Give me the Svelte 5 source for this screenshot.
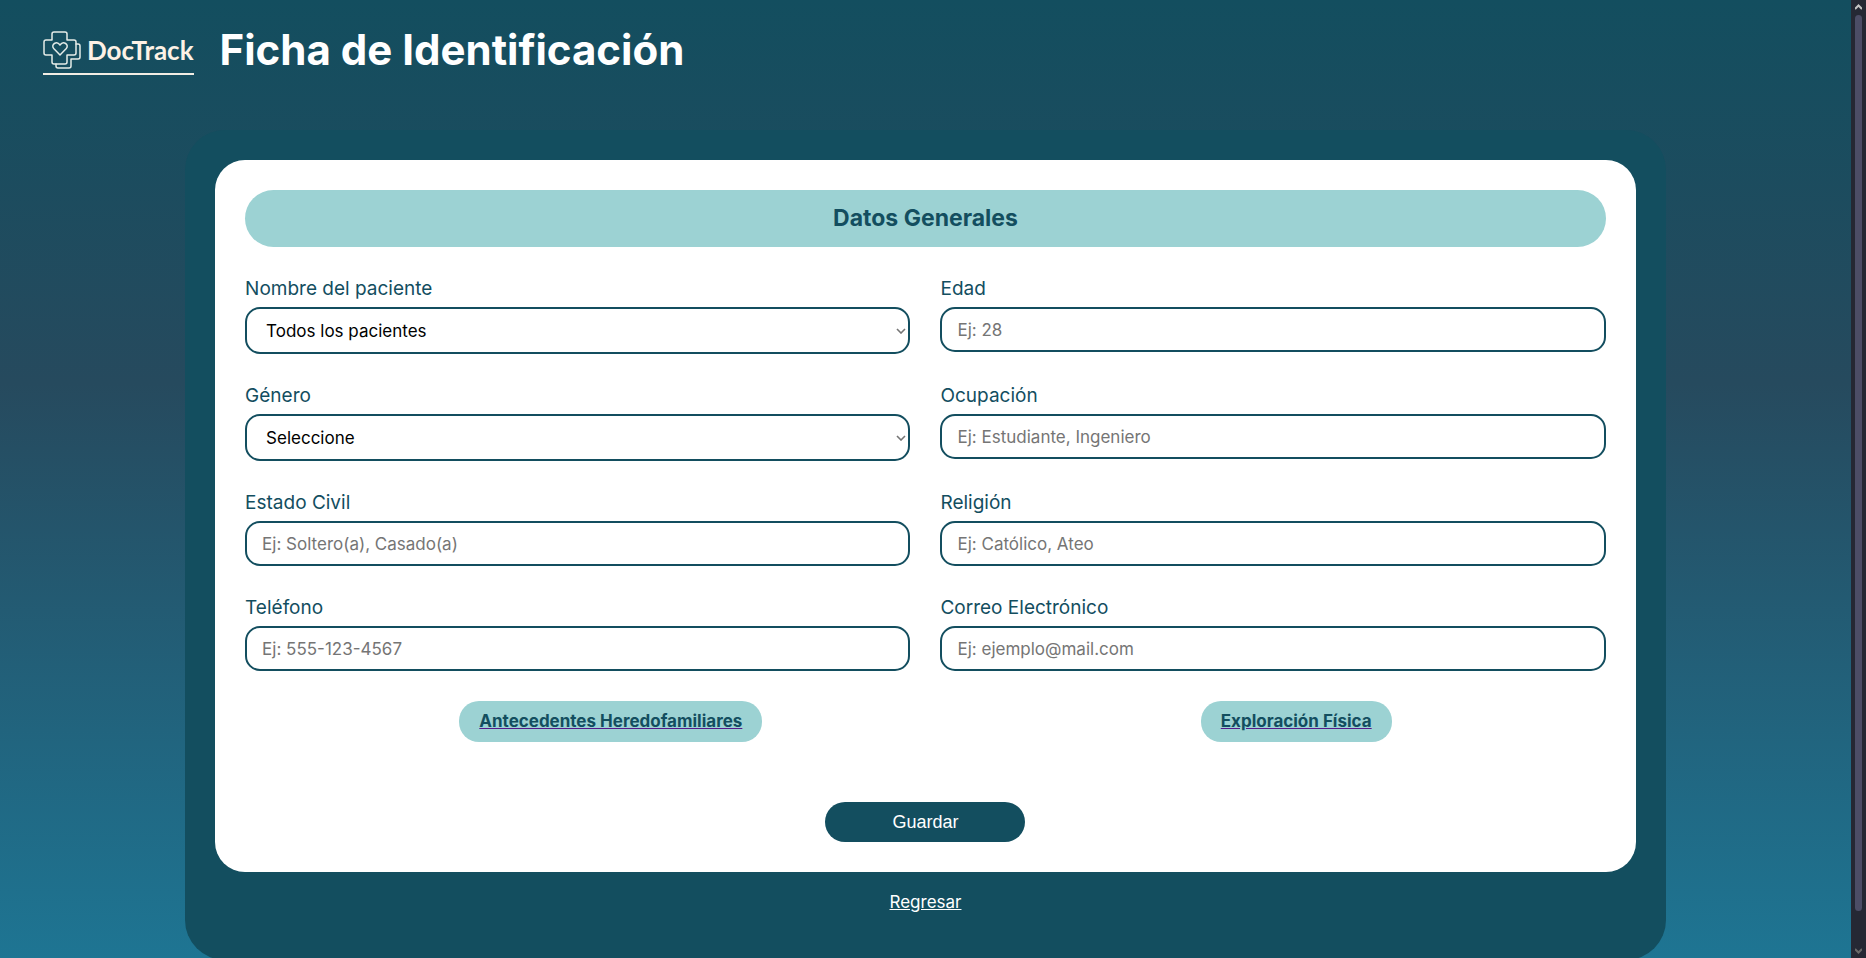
<script>
  const fields = [
    { id: 'nombre', label: 'Nombre del paciente', options: ['Todos los pacientes'] },
    { id: 'edad', label: 'Edad', type: 'text', placeholder: 'Ej: 28' },
    { id: 'genero', label: 'Género', options: ['Seleccione', 'Femenino', 'Masculino'] },
    { id: 'ocupacion', label: 'Ocupación', type: 'text', placeholder: 'Ej: Estudiante, Ingeniero' },
    { id: 'estado', label: 'Estado Civil', type: 'text', placeholder: 'Ej: Soltero(a), Casado(a)' },
    { id: 'religion', label: 'Religión', type: 'text', placeholder: 'Ej: Católico, Ateo' },
    { id: 'telefono', label: 'Teléfono', type: 'tel', placeholder: 'Ej: 555-123-4567' },
    { id: 'correo', label: 'Correo Electrónico', type: 'email', placeholder: 'Ej: ejemplo@mail.com' }
  ];
</script>

<div class="window">
  <div class="page">
    <header>
      <a class="logo" href="#inicio">
        <svg width="38" height="38" viewBox="0 0 38 38" fill="none" stroke="currentColor" stroke-width="1.5" stroke-linejoin="round" stroke-linecap="round" aria-hidden="true">
          <path d="M11 1h11a2 2 0 0 1 2 2v6h7a2 2 0 0 1 2 2v11a2 2 0 0 1-2 2h-7v7a2 2 0 0 1-2 2H11a2 2 0 0 1-2-2v-7H3a2 2 0 0 1-2-2V11a2 2 0 0 1 2-2h6V3a2 2 0 0 1 2-2z" />
          <path d="M33 13h2a2 2 0 0 1 2 2v11a2 2 0 0 1-2 2h-7v7a2 2 0 0 1-2 2H15a2 2 0 0 1-2-2v-2" />
          <path d="M17 24l-6.300-6.500c-3.300-4 3-8.200 6.300-3.500 3.300-4.700 9.600-.5 6.300 3.500z" />
        </svg>
        <span>DocTrack</span>
      </a>
      <h1>Ficha de Identificación</h1>
    </header>

    <main>
      <form onsubmit={(e) => e.preventDefault()}>
        <h2>Datos Generales</h2>
        <div class="fields">
          {#each fields as f (f.id)}
            <div class="field">
              <label for={f.id}>{f.label}</label>
              {#if f.options}
                <select id={f.id}>
                  {#each f.options as o}<option>{o}</option>{/each}
                </select>
              {:else}
                <input id={f.id} type={f.type} placeholder={f.placeholder} />
              {/if}
            </div>
          {/each}
        </div>
        <nav>
          <a href="#antecedentes"><span>Antecedentes Heredofamiliares</span></a>
          <a href="#exploracion"><span>Exploración Física</span></a>
        </nav>
        <button type="submit">Guardar</button>
      </form>
      <a class="back" href="#regresar">Regresar</a>
    </main>
  </div>

  <div class="scrollbar" aria-hidden="true">
    <svg width="7" height="6" viewBox="0 0 7 6" fill="none" stroke="#c4c4c4" stroke-width="2"><path d="M0 5l3.500-3.500L7 5" /></svg>
    <div class="thumb"></div>
    <svg width="7" height="6" viewBox="0 0 7 6" fill="none" stroke="#6a6a6a" stroke-width="2"><path d="M0 1l3.500 3.500L7 1" /></svg>
  </div>
</div>

<style>
  :global(body) {
    margin: 0;
  }

  .window {
    --teal: #134e5f;
    --aqua: #9cd2d3;
    display: grid;
    grid-template-columns: minmax(0, 1fr) 15px;
    height: 100vh;
    font-family: Inter, sans-serif;
    font-size: 17px;
  }

  .page {
    overflow-y: auto;
    scrollbar-width: none;
    background: linear-gradient(to bottom, #134e5f, #264a5e 40%, #1e7593);
  }

  header {
    display: flex;
    align-items: center;
    gap: 26px;
    height: 100px;
    padding: 0 43px;
    margin-bottom: 30px;
  }

  .logo {
    display: flex;
    align-items: center;
    gap: 6px;
    padding-bottom: 4px;
    margin-top: 6px;
    border-bottom: 2px solid #f2ede4;
    color: #e4ebe8;
    text-decoration: none;
  }

  .logo span {
    color: #fdf2e6;
    font: 700 26px/38px Lato, sans-serif;
  }

  h1 {
    margin: 0;
    color: #fff;
    font-size: 42px;
    line-height: 50px;
  }

  main {
    box-sizing: border-box;
    width: 80%;
    padding: 30px 30px 48px;
    margin: 0 auto 34px;
    border-radius: 40px;
    background: var(--teal);
    text-align: center;
  }

  form {
    padding: 30px;
    margin-bottom: 20px;
    border-radius: 30px;
    background: #fff;
  }

  h2 {
    margin: 0 0 30px;
    border-radius: 30px;
    background: var(--aqua);
    color: var(--teal);
    font-size: 23px;
    line-height: 57px;
  }

  .fields {
    display: grid;
    grid-template-columns: 1fr 1fr;
    gap: 30px;
  }

  .field {
    display: flex;
    flex-direction: column;
    text-align: left;
  }

  label {
    margin-bottom: 7px;
    color: var(--teal);
    font-size: 19px;
    line-height: 23px;
  }

  input,
  select {
    box-sizing: border-box;
    width: 100%;
    height: 45px;
    padding: 0 15px;
    border: 2px solid var(--teal);
    border-radius: 15px;
    background: #fff;
    color: #000;
    font: inherit;
  }

  select {
    height: 47px;
    padding: 0 19px;
    appearance: none;
    background: #fff
      url("data:image/svg+xml,%3Csvg xmlns='http://www.w3.org/2000/svg' width='10' height='6' fill='none' stroke='%23757575' stroke-width='1.6'%3E%3Cpath d='M1 1l4 4 4-4'/%3E%3C/svg%3E")
      no-repeat right 2px center;
  }

  input::placeholder {
    color: #757575;
  }

  nav {
    display: flex;
    justify-content: space-around;
    gap: 10px;
    margin: 30px 0 60px;
  }

  nav a {
    padding: 10px 20px;
    border-radius: 20px;
    background: var(--aqua);
    color: #551a8b;
    font-weight: 700;
    line-height: 21px;
  }

  nav span {
    color: var(--teal);
  }

  button {
    width: 200px;
    height: 40px;
    border: 0;
    border-radius: 20px;
    background: var(--teal);
    color: #fff;
    font: 18px "Liberation Sans", sans-serif;
  }

  .back {
    display: inline-block;
    color: #fff;
    line-height: 20px;
  }

  .scrollbar {
    display: flex;
    flex-direction: column;
    align-items: center;
    gap: 5px;
    box-sizing: border-box;
    padding: 4px 0;
    background: #252834;
  }

  .thumb {
    flex: 1;
    width: 7px;
    margin-bottom: 32px;
    border-radius: 4px;
    background: #4c4d66;
  }
</style>
